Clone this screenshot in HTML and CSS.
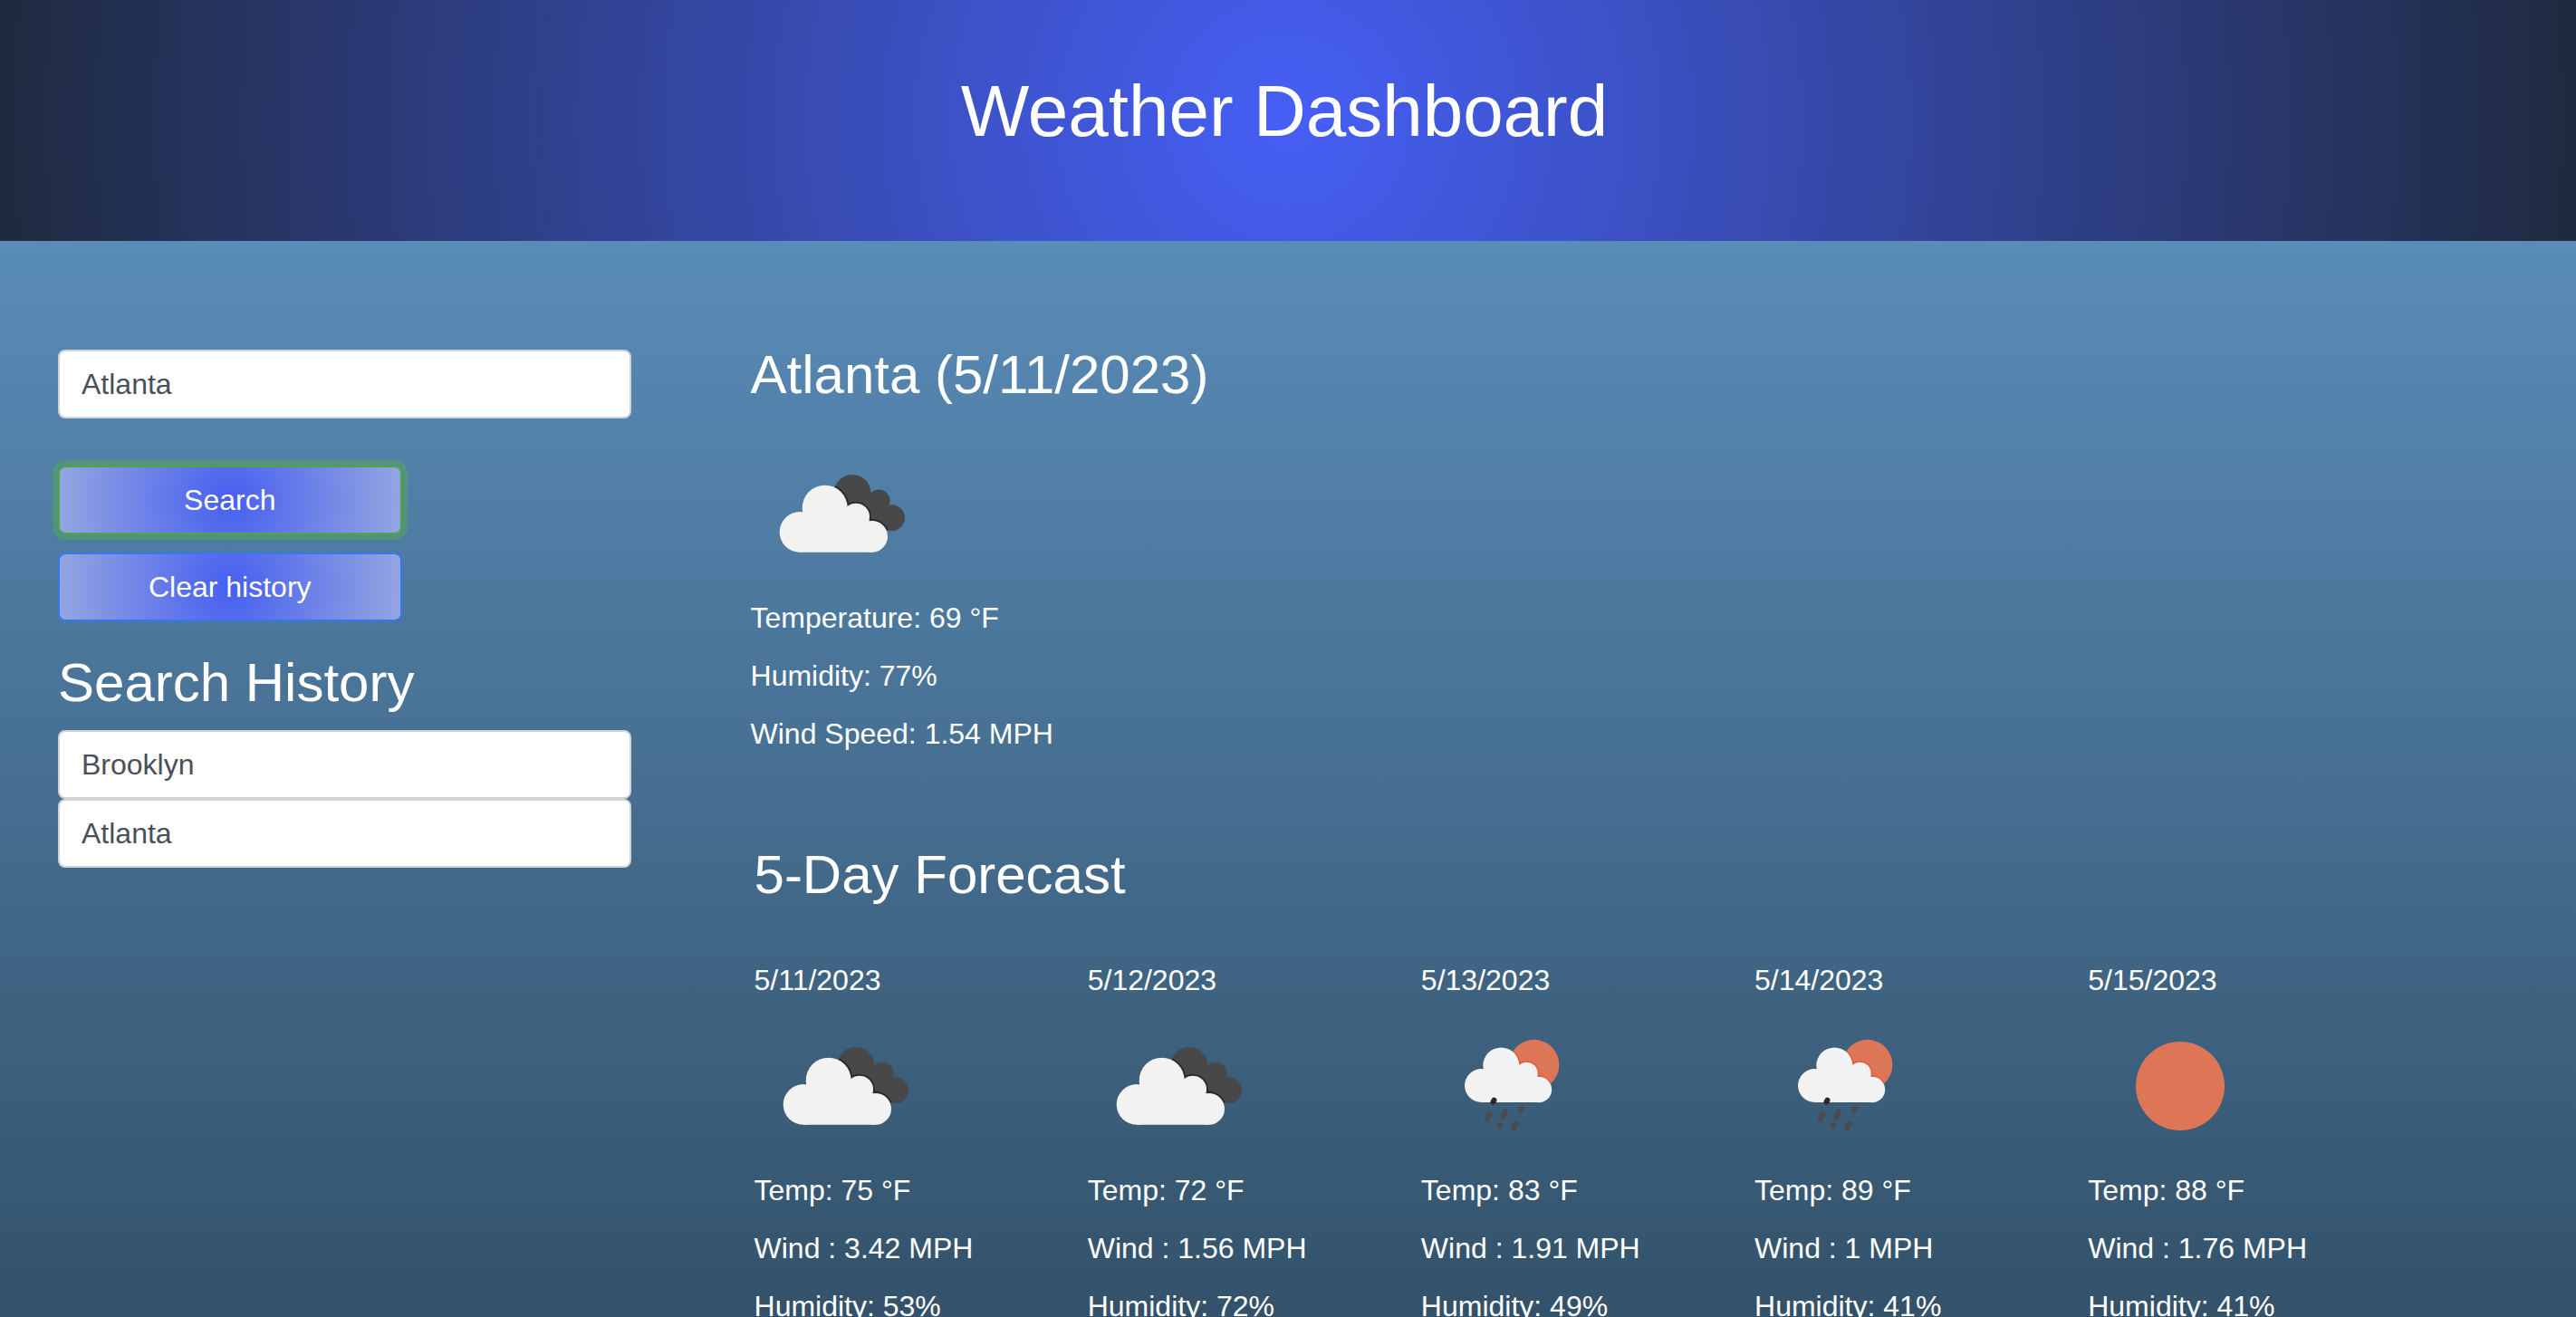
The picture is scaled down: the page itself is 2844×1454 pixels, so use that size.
FILE: index.html
```html
<!DOCTYPE html>
<html lang="en">
<head>
<meta charset="utf-8">
<title>Weather Dashboard</title>
<link rel="stylesheet" href="styles.css">
</head>
<body>
<svg class="sprite" aria-hidden="true">
  <defs>
    <clipPath id="back-cloud">
      <circle cx="112" cy="70.5" r="20.5"/>
      <circle cx="141.3" cy="79" r="12.5"/>
      <circle cx="155.5" cy="97.8" r="14.5"/>
      <path d="M112 70L132 70L153.500 84L155 98L150 111L100 90Z"/>
    </clipPath>
    <clipPath id="back-sun">
      <circle cx="124.700" cy="69.500" r="27.700"/>
    </clipPath>
  </defs>
  <symbol id="broken-clouds" viewBox="0 0 200 184">
    <g clip-path="url(#back-cloud)">
      <rect width="200" height="184" fill="#48484a"/>
      <g fill="none" stroke="#2c2c2e" stroke-width="4">
        <circle cx="81.700" cy="86.700" r="25"/>
        <circle cx="116" cy="96.700" r="15"/>
        <circle cx="133.600" cy="118.300" r="17.400"/>
      </g>
    </g>
    <g fill="#f2f2f0">
      <circle cx="81.700" cy="86.700" r="25"/>
      <circle cx="54" cy="113.400" r="22.300"/>
      <circle cx="116" cy="96.700" r="15"/>
      <circle cx="133.600" cy="118.300" r="17.400"/>
      <path d="M54 113L57 91.300L82 87L106 85.500L116 97L131 101.500L134 118V135.700H54Z"/>
    </g>
  </symbol>
  <symbol id="sun-rain" viewBox="0 0 200 184">
    <g clip-path="url(#back-sun)">
      <rect width="200" height="184" fill="#dc7656"/>
      <g fill="none" stroke="#e05a36" stroke-width="3">
        <circle cx="88.300" cy="70.500" r="20"/>
        <circle cx="116.500" cy="79" r="12.300"/>
        <circle cx="130" cy="97" r="14.200"/>
      </g>
    </g>
    <g fill="#f2f2f2">
      <circle cx="88.300" cy="70.500" r="20"/>
      <circle cx="66.500" cy="92.500" r="18.500"/>
      <circle cx="116.500" cy="79" r="12.300"/>
      <circle cx="130" cy="97" r="14.200"/>
      <path d="M66 92L69 74.200L88 70L108.500 69.500L116 79L128.300 83.300L130 97V111H66Z"/>
    </g>
    <g fill="none" stroke="#4b4b4d" stroke-width="6" stroke-linecap="round">
      <path stroke="#2a2a2b" d="M80.500 108.700L79.500 110.700"/>
      <path d="M75.500 123.500L73 129.300M92.700 121L90.200 126.800M110.500 118.200L109.500 119.800M86.900 136.400L86.500 137M104.700 134L102.200 139.500"/>
    </g>
  </symbol>
  <symbol id="clear-sky" viewBox="0 0 200 184">
    <circle cx="102" cy="93" r="49" fill="#dc7656"/>
  </symbol>
</svg>

<header class="banner">
  <h1>Weather Dashboard</h1>
</header>

<main class="dashboard">
  <aside class="sidebar">
    <form class="search">
      <input class="field" type="text" value="Atlanta" aria-label="City">
      <button class="btn btn-active" type="button">Search</button>
      <button class="btn" type="button">Clear history</button>
    </form>
    <h2>Search History</h2>
    <div class="history">
      <button class="field" type="button">Brooklyn</button>
      <button class="field" type="button">Atlanta</button>
    </div>
  </aside>

  <div class="weather">
    <section class="current">
      <h2>Atlanta (5/11/2023)</h2>
      <svg class="icon" role="img" aria-label="Broken clouds"><use href="#broken-clouds"/></svg>
      <p>Temperature: 69 °F</p>
      <p>Humidity: 77%</p>
      <p>Wind Speed: 1.54 MPH</p>
    </section>

    <section class="forecast">
      <h2>5-Day Forecast</h2>
      <div class="days">
        <article class="day">
          <p class="date">5/11/2023</p>
          <svg class="icon" role="img" aria-label="Broken clouds"><use href="#broken-clouds"/></svg>
          <p>Temp: 75 °F</p>
          <p>Wind : 3.42 MPH</p>
          <p>Humidity: 53%</p>
        </article>
        <article class="day">
          <p class="date">5/12/2023</p>
          <svg class="icon" role="img" aria-label="Broken clouds"><use href="#broken-clouds"/></svg>
          <p>Temp: 72 °F</p>
          <p>Wind : 1.56 MPH</p>
          <p>Humidity: 72%</p>
        </article>
        <article class="day">
          <p class="date">5/13/2023</p>
          <svg class="icon" role="img" aria-label="Rain and sun"><use href="#sun-rain"/></svg>
          <p>Temp: 83 °F</p>
          <p>Wind : 1.91 MPH</p>
          <p>Humidity: 49%</p>
        </article>
        <article class="day">
          <p class="date">5/14/2023</p>
          <svg class="icon" role="img" aria-label="Rain and sun"><use href="#sun-rain"/></svg>
          <p>Temp: 89 °F</p>
          <p>Wind : 1 MPH</p>
          <p>Humidity: 41%</p>
        </article>
        <article class="day">
          <p class="date">5/15/2023</p>
          <svg class="icon" role="img" aria-label="Clear sky"><use href="#clear-sky"/></svg>
          <p>Temp: 88 °F</p>
          <p>Wind : 1.76 MPH</p>
          <p>Humidity: 41%</p>
        </article>
      </div>
    </section>
  </div>
</main>
</body>
</html>
```

FILE: styles.css
```css
* {
  box-sizing: border-box;
}

html {
  scrollbar-width: none;
}

body {
  margin: 0;
  min-height: 100vh;
  background: linear-gradient(#6299ca, #33526a) fixed;
  color: #fff;
  font: 32px/48px "Liberation Sans", Helvetica, Arial, sans-serif;
}

h1,
h2,
p {
  margin: 0;
  font-weight: 400;
}

h1 {
  font-size: 80px;
  line-height: 96px;
}

h2 {
  font-size: 60px;
  line-height: 72px;
}

.sprite {
  position: absolute;
  width: 0;
  height: 0;
}

.banner {
  padding: 75px 40px 95px 32px;
  background: radial-gradient(circle, #465ff5, #1f2a3f);
  text-align: center;
}

.dashboard {
  display: grid;
  grid-template-columns: 12fr 35fr;
  column-gap: 132px;
  padding: 112px 6% 0 64px;
}

.sidebar {
  padding-top: 8px;
}

.search {
  display: flex;
  flex-direction: column;
  align-items: flex-start;
  gap: 20px;
  margin-bottom: 32px;
}

.search .field {
  margin-bottom: 32px;
}

.field {
  display: block;
  width: 100%;
  height: 76px;
  padding: 12px 24px;
  border: 2px solid #ced4da;
  border-radius: 8px;
  background: #fff;
  color: #495057;
  font: inherit;
  text-align: left;
}

.btn {
  width: 60%;
  height: 76px;
  padding: 12px 24px;
  border: 2px solid #3478f6;
  border-radius: 8px;
  background: radial-gradient(circle, #465ff0, #94a6e0) padding-box;
  color: #fff;
  font: inherit;
}

.btn-active {
  border-color: #4fa54f;
  box-shadow: 0 0 0 6px rgba(84, 170, 80, 0.5);
}

.history {
  margin-top: 16px;
}

.icon {
  display: block;
  width: 200px;
  height: 184px;
}

.current h2 {
  margin-bottom: 24px;
}

.current p,
.day p {
  margin-bottom: 16px;
}

.forecast {
  padding: 80px 0 0 4px;
}

.days {
  display: grid;
  grid-template-columns: repeat(5, 1fr);
  margin-top: 56px;
}

.day .date {
  margin-bottom: 0;
}
```
